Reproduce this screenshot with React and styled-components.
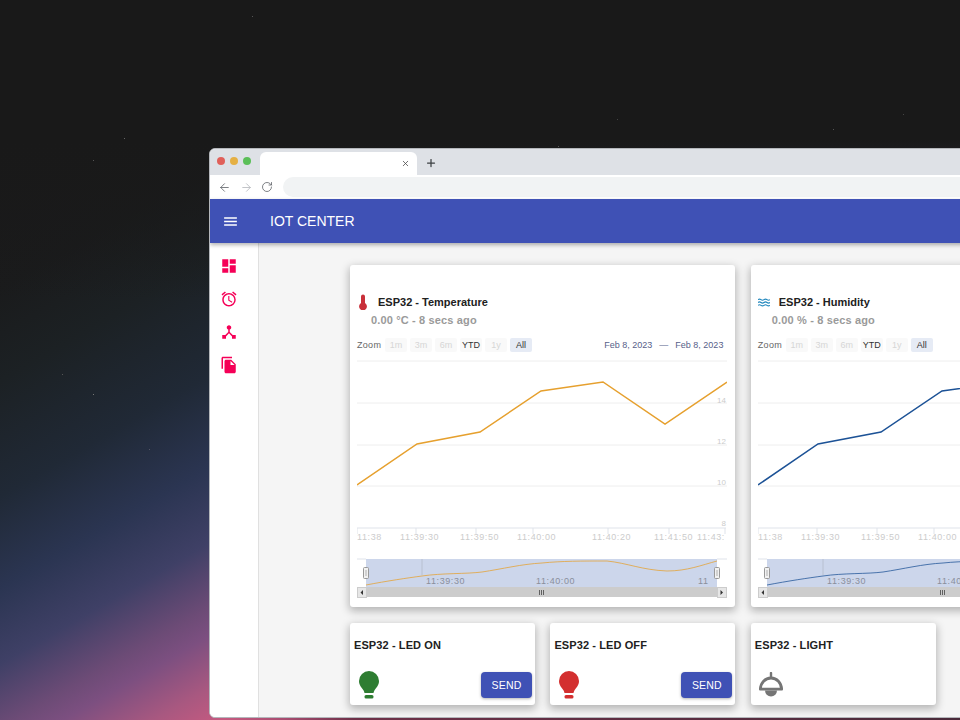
import styled, { createGlobalStyle } from "styled-components";
import { ArrowLeft, ArrowRight, RotateCw, Plus, X } from "lucide-react";
import {
  MdMenu,
  MdDashboard,
  MdAccessAlarm,
  MdDeviceHub,
  MdFileCopy,
} from "react-icons/md";

const Global = createGlobalStyle`
  html, body { margin: 0; padding: 0; background: #181818; }
  * { box-sizing: border-box; }
`;

const Stage = styled.div`
  width: 960px;
  height: 720px;
  overflow: hidden;
  position: relative;
  padding: 148px 0 0 209px;
  font-family: "Liberation Sans", Arial, sans-serif;
  background:
    linear-gradient(180deg, #191919 140px, rgba(25, 25, 25, 0) 300px),
    linear-gradient(
      150deg,
      #181818 0,
      #1a1b1c 250px,
      #1c2124 330px,
      #202936 430px,
      #2b3552 510px,
      #3f4066 575px,
      #6c4b76 630px,
      #7c4f80 655px,
      #a85880 700px,
      #c55a80 735px,
      #a84c70 765px,
      #6e3048 800px,
      #4a2a3a 1100px
    );
`;

const Stars = styled.i`
  position: absolute;
  left: 0;
  top: 0;
  width: 1px;
  height: 1px;
  box-shadow: 252px 16px #555, 124px 138px #666, 93px 160px #555, 558px 146px #555,
    62px 374px #555, 93px 394px #777, 149px 449px #556, 617px 119px #444, 833px 129px #555,
    903px 114px #444;
`;

const Win = styled.div`
  width: 900px;
  height: 570px;
  border: 1px solid #b4b7bb;
  border-radius: 6px 0 0 6px;
  overflow: hidden;
  position: relative;
  display: flex;
  flex-direction: column;
  background: #fff;
`;

const TabStrip = styled.div`
  height: 26px;
  flex: none;
  background: #dee1e6;
  display: flex;
  align-items: flex-end;
  padding-left: 7px;
`;

const Lights = styled.div`
  display: flex;
  gap: 5px;
  width: 43px;
  align-self: flex-start;
  padding-top: 8px;
`;

const Light = styled.span`
  width: 8px;
  height: 8px;
  border-radius: 50%;
  background: ${(p) => p.$c};
`;

const Tab = styled.div`
  width: 157px;
  height: 23px;
  background: #fff;
  border-radius: 6px 6px 0 0;
  display: flex;
  align-items: center;
  justify-content: flex-end;
  padding: 0 7px 1px 0;
  color: #444;
`;

const NewTab = styled.div`
  display: flex;
  align-self: center;
  margin: 2px 0 0 8px;
  color: #3c4043;
`;

const NavBar = styled.div`
  height: 24px;
  flex: none;
  background: #fff;
  display: flex;
  align-items: center;
  padding-left: 8px;
  gap: 8.5px;
`;

const NavIcon = styled.span`
  display: flex;
  width: 13px;
  color: ${(p) => (p.$off ? "#b5b8bc" : "#5f6368")};
`;

const Url = styled.div`
  flex: 1;
  height: 20px;
  background: #f1f3f4;
  border-radius: 10px;
`;

const AppBar = styled.header`
  height: 44px;
  flex: none;
  background: #3f51b5;
  color: #fff;
  display: flex;
  align-items: center;
  padding-left: 12px;
  position: relative;
  z-index: 2;
  box-shadow: 0 2px 4px rgba(0, 0, 0, 0.3);
`;

const Brand = styled.div`
  margin-left: 31px;
  font-size: 14px;
  line-height: 16px;
`;

const Body = styled.div`
  flex: 1;
  display: flex;
  min-height: 0;
`;

const Side = styled.nav`
  width: 49px;
  flex: none;
  background: #fff;
  border-right: 1px solid #e0e0e0;
  display: flex;
  flex-direction: column;
  align-items: flex-start;
  padding: 14px 0 0 10px;
  gap: 15px;
  color: #f50057;
`;

const Main = styled.main`
  flex: 1;
  background: #f5f5f5;
  padding: 22px 0 0 91px;
  display: grid;
  grid-template-columns: repeat(4, 185px);
  grid-auto-rows: min-content;
  gap: 16px 15.4px;
`;

const Card = styled.section`
  background: #fff;
  border-radius: 3px;
  box-shadow: 0 3px 8px 1px rgba(0, 0, 0, 0.27);
`;

const ChartCard = styled(Card)`
  grid-column: span 2;
  height: 342px;
  padding: 29px 8px 0 7px;
`;

const TitleRow = styled.div`
  display: flex;
  align-items: center;
  height: 16px;
  font-size: 11px;
  font-weight: 700;
  color: #212121;
  gap: 9px;
`;

const TitleIcon = styled.span`
  display: flex;
  width: 12px;
  justify-content: center;
`;

const Reading = styled.div`
  margin: 2px 0 0 14px;
  height: 16px;
  line-height: 16px;
  font-size: 11px;
  font-weight: 700;
  letter-spacing: 0.15px;
  color: #9a9a9a;
`;

const Toolbar = styled.div`
  display: flex;
  align-items: center;
  height: 14px;
  margin-top: 10px;
  font-size: 9px;
  color: #666;
`;

const ZoomLabel = styled.span`
  width: 28px;
  letter-spacing: 0.3px;
`;

const Ranges = styled.div`
  display: flex;
  gap: 3px;
`;

const Range = styled.span`
  width: 22px;
  height: 14px;
  line-height: 14px;
  text-align: center;
  border-radius: 2px;
  background: ${(p) => (p.$on ? "#e6ebf5" : "#f9f9f9")};
  color: ${(p) => (p.$off ? "#d6d6d6" : "#333")};
`;

const Dates = styled.div`
  margin-left: auto;
  margin-right: 4px;
  display: flex;
  gap: 7px;
  color: #57618a;
`;

const Plot = styled.svg`
  display: block;
  margin-top: 8px;
  width: 370px;
  height: 238px;
  font-family: "Liberation Sans", Arial, sans-serif;
`;

const SmallCard = styled(Card)`
  height: 82px;
  padding: 14px 3px 7px 4px;
  display: flex;
  flex-direction: column;
  justify-content: space-between;
`;

const SmallTitle = styled.div`
  font-size: 11px;
  line-height: 16px;
  font-weight: 700;
  letter-spacing: 0.1px;
  color: #212121;
`;

const SmallRow = styled.div`
  display: flex;
  align-items: flex-end;
  justify-content: space-between;
  padding-left: ${(p) => p.$inset}px;
`;

const BulbIcon = styled.svg`
  display: block;
  margin-bottom: -1px;
`;

const SendButton = styled.button`
  width: 51px;
  height: 26px;
  border: 0;
  border-radius: 4px;
  background: #3f51b5;
  color: #fff;
  font-family: inherit;
  font-size: 10.5px;
  letter-spacing: 0.2px;
  box-shadow: 0 1px 3px rgba(0, 0, 0, 0.3);
  cursor: pointer;
`;

const gridY = [1, 43, 85, 126];
const ticks = [0, 59, 119, 176, 251, 312, 368];
const xLabels = [
  ["11:38", 0],
  ["11:39:30", 43],
  ["11:39:50", 103],
  ["11:40:00", 160],
  ["11:40:20", 235],
  ["11:41:50", 297],
  ["11:43:", 340],
];
const yLabels = [
  ["14", 43],
  ["12", 84],
  ["10", 125],
  ["8", 166],
];

const Chart = ({ color }) => (
  <Plot viewBox="0 0 370 238">
    {gridY.map((y) => (
      <line key={y} x1="0" x2="370" y1={y} y2={y} stroke="#eeeeee" />
    ))}
    <line x1="0" x2="369" y1="168" y2="168" stroke="#dfe3ea" />
    {ticks.map((x) => (
      <line key={x} x1={x} x2={x} y1="168" y2="174" stroke="#dfe3ea" />
    ))}
    {xLabels.map(([t, x]) => (
      <text key={t} x={x} y="180" fontSize="9" letterSpacing="0.6" fill="#cccccc">
        {t}
      </text>
    ))}
    {yLabels.map(([t, y]) => (
      <text key={t} x="369" y={y} fontSize="8" textAnchor="end" fill="#cccccc">
        {t}
      </text>
    ))}
    <polyline
      points="0,125 60,84 123,72 184,31 246,22 308,64 370,22"
      fill="none"
      stroke={color}
      strokeWidth="1.5"
    />

    <rect x="9" y="199" width="351" height="28" fill="#ccd6eb" />
    <line x1="65" x2="65" y1="199" y2="215" stroke="#b8c0d0" />
    <line x1="0" x2="9" y1="199" y2="199" stroke="#dfe3ea" />
    <line x1="360" x2="370" y1="199" y2="199" stroke="#dfe3ea" />
    <text x="69" y="224" fontSize="9" letterSpacing="0.6" fill="#8a8f9c">11:39:30</text>
    <text x="179" y="224" fontSize="9" letterSpacing="0.6" fill="#8a8f9c">11:40:00</text>
    <text x="341" y="224" fontSize="9" letterSpacing="0.6" fill="#8a8f9c">11</text>
    <path
      d="M9 225 C30 221 50 218 65 216 C85 213 110 214 125 212 C145 209 165 204 185 203 C205 201 225 201 250 201 C270 203 285 210 310 211 C330 211 345 205 360 201"
      fill="none"
      stroke={color}
      strokeOpacity="0.75"
      strokeWidth="1"
    />
    <rect x="0" y="227" width="370" height="10" fill="#cccccc" />
    <rect x="0.5" y="227.5" width="9" height="10" fill="#e6e6e6" stroke="#cccccc" />
    <rect x="360.5" y="227.5" width="9" height="10" fill="#e6e6e6" stroke="#cccccc" />
    <path d="M6 230 L3.5 232.5 L6 235 Z M363.5 230 L366 232.5 L363.5 235 Z" fill="#333" />
    <path d="M182.5 230v5M184.5 230v5M186.5 230v5" stroke="#444" strokeWidth="0.8" />
    {[6, 357].map((x) => (
      <g key={x}>
        <rect x={x + 0.5} y="207.5" width="5" height="11" rx="1" fill="#f2f2f2" stroke="#999" />
        <path d={`M${x + 2.5} 210v6M${x + 3.5} 210v6`} stroke="#bbb" strokeWidth="0.6" />
      </g>
    ))}
  </Plot>
);

const Thermometer = () => (
  <svg width="10" height="16" viewBox="0 0 10 16">
    <path d="M3 2.5a2 2 0 0 1 4 0v6.6a3.9 3.9 0 1 1-4 0z" fill="#c9303a" />
  </svg>
);

const Waves = () => (
  <svg width="14" height="9" viewBox="0 0 14 9">
    <path
      d="M0 1.200c1.200-.9 2.300-.9 3.500 0s2.300.9 3.500 0 2.300-.9 3.500 0 2.300.9 3.500 0M0 4.500c1.200-.9 2.300-.9 3.500 0s2.300.9 3.500 0 2.300-.9 3.500 0 2.300.9 3.500 0M0 7.800c1.200-.9 2.300-.9 3.500 0s2.300.9 3.500 0 2.300-.9 3.500 0 2.300.9 3.500 0"
      fill="none"
      stroke="#1f86bd"
      strokeWidth="1.300"
    />
  </svg>
);

const Bulb = ({ color }) => (
  <BulbIcon width="20" height="28" viewBox="0 0 20 28">
    <path
      d="M10 0a10 10 0 0 1 10 10c0 4.600-3 7-4.600 9.500-.6 1-.7 1.900-.9 2.500h-9c-.2-.6-.3-1.500-.9-2.500C3 17 0 14.600 0 10A10 10 0 0 1 10 0z"
      fill={color}
    />
    <rect x="5.500" y="24" width="9" height="3.500" rx="1.500" fill={color} />
  </BulbIcon>
);

const Lamp = () => (
  <svg width="26" height="26" viewBox="0 0 26 26">
    <path d="M13 1v4" stroke="#757575" strokeWidth="2.400" strokeLinecap="round" />
    <path d="M2.500 17a10.500 11 0 0 1 21 0" fill="none" stroke="#757575" strokeWidth="2.800" />
    <rect x="1" y="15.800" width="24" height="2.600" rx="1" fill="#757575" />
    <path d="M7 18.400h12a6 6 0 0 1-12 0z" fill="#757575" />
  </svg>
);

const Panel = ({ icon, title, reading, color }) => (
  <ChartCard>
    <TitleRow>
      <TitleIcon>{icon}</TitleIcon>
      {title}
    </TitleRow>
    <Reading>{reading}</Reading>
    <Toolbar>
      <ZoomLabel>Zoom</ZoomLabel>
      <Ranges>
        <Range $off>1m</Range>
        <Range $off>3m</Range>
        <Range $off>6m</Range>
        <Range>YTD</Range>
        <Range $off>1y</Range>
        <Range $on>All</Range>
      </Ranges>
      <Dates>
        <span>Feb 8, 2023</span>
        <span>—</span>
        <span>Feb 8, 2023</span>
      </Dates>
    </Toolbar>
    <Chart color={color} />
  </ChartCard>
);

export default function App() {
  return (
    <Stage>
      <Global />
      <Stars />
      <Win>
        <TabStrip>
          <Lights>
            <Light $c="#e0605a" />
            <Light $c="#e5b044" />
            <Light $c="#5bbf58" />
          </Lights>
          <Tab>
            <X size={9} strokeWidth={2} />
          </Tab>
          <NewTab>
            <Plus size={12} strokeWidth={2.5} />
          </NewTab>
        </TabStrip>
        <NavBar>
          <NavIcon>
            <ArrowLeft size={13} strokeWidth={1.5} />
          </NavIcon>
          <NavIcon $off>
            <ArrowRight size={13} strokeWidth={1.5} />
          </NavIcon>
          <NavIcon>
            <RotateCw size={12} strokeWidth={1.6} />
          </NavIcon>
          <Url />
        </NavBar>
        <AppBar>
          <MdMenu size={17} />
          <Brand>IOT CENTER</Brand>
        </AppBar>
        <Body>
          <Side>
            <MdDashboard size={18} />
            <MdAccessAlarm size={18} />
            <MdDeviceHub size={18} />
            <MdFileCopy size={18} />
          </Side>
          <Main>
            <Panel
              icon={<Thermometer />}
              title="ESP32 - Temperature"
              reading="0.00 °C - 8 secs ago"
              color="#e6a02e"
            />
            <Panel
              icon={<Waves />}
              title="ESP32 - Humidity"
              reading="0.00 % - 8 secs ago"
              color="#1c5296"
            />
            <SmallCard>
              <SmallTitle>ESP32 - LED ON</SmallTitle>
              <SmallRow $inset={5}>
                <Bulb color="#2e7d32" />
                <SendButton>SEND</SendButton>
              </SmallRow>
            </SmallCard>
            <SmallCard>
              <SmallTitle>ESP32 - LED OFF</SmallTitle>
              <SmallRow $inset={5}>
                <Bulb color="#d32f2f" />
                <SendButton>SEND</SendButton>
              </SmallRow>
            </SmallCard>
            <SmallCard>
              <SmallTitle>ESP32 - LIGHT</SmallTitle>
              <SmallRow $inset={3}>
                <Lamp />
              </SmallRow>
            </SmallCard>
          </Main>
        </Body>
      </Win>
    </Stage>
  );
}
